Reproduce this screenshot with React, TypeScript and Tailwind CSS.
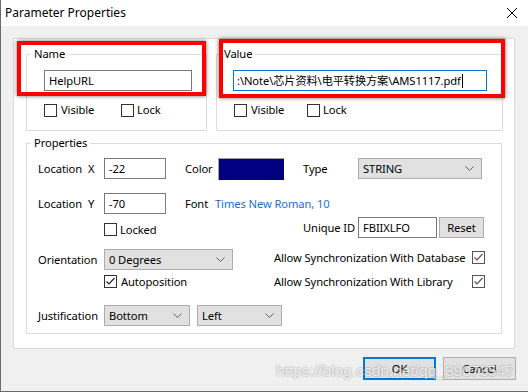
import React from "react";

const Chevron = () => (
  <svg width="9" height="5" viewBox="0 0 9 5" className="shrink-0">
    <polyline points="0.5,0.5 4.5,4.5 8.5,0.5" fill="none" stroke="#606060" strokeWidth="1" />
  </svg>
);

const Check = ({ gray }: { gray?: boolean }) => (
  <svg width="11" height="11" viewBox="0 0 11 11">
    <polyline points="1.5,5.5 4,8 9.5,2" fill="none" stroke={gray ? "#555" : "#222"} strokeWidth="1.2" />
  </svg>
);

const Box = ({ checked, gray }: { checked?: boolean; gray?: boolean }) => (
  <span
    className={
      "flex items-center justify-center w-[13px] h-[13px] bg-white border shrink-0 " +
      (gray ? "border-[#555]" : "border-[#333]")
    }
  >
    {checked ? <Check gray={gray} /> : null}
  </span>
);

const Select = ({ value, w }: { value: string; w: string }) => (
  <div className={"flex items-center justify-between h-[21px] border border-[#adadad] bg-[#e1e1e1] pl-[4px] pr-[7px] " + w}>
    <span>{value}</span>
    <Chevron />
  </div>
);

const Input = ({ value, w }: { value: string; w: string }) => (
  <div className={"flex items-center h-[21px] border border-[#7a7a7a] bg-white pl-[4px] whitespace-nowrap " + w}>
    <span>{value}</span>
  </div>
);

export default function App() {
  return (
    <div className="relative w-[528px] h-[392px] bg-[#f0f0f0] border-l border-b border-[#6b6b6b] text-[11.2px] leading-[14px] tracking-[-0.1px] text-black font-['Noto_Sans','Noto_Sans_CJK_SC',sans-serif] overflow-hidden">
      {/* title bar */}
      <div className="flex items-center justify-between h-[26px] bg-white pl-[4px] pr-[11px]">
        <span className="text-[12px] tracking-normal">Parameter Properties</span>
        <svg width="10" height="10" viewBox="0 0 10 10">
          <line x1="0" y1="0" x2="10" y2="10" stroke="#000" strokeWidth="1" />
          <line x1="10" y1="0" x2="0" y2="10" stroke="#000" strokeWidth="1" />
        </svg>
      </div>

      {/* white panel */}
      <div className="mt-[12px] ml-[12px] w-[502px] h-[311px] bg-white border border-[#d9d9d9] pl-[12px] pt-[8px]">
        <div className="flex">
          <fieldset className="w-[181px] h-[84px] border border-[#dcdcdc]">
            <legend className="ml-[4px] px-[3px]">Name</legend>
            <div className="ml-[17px] mt-[9px]">
              <Input value="HelpURL" w="w-[148px]" />
            </div>
            <div className="flex items-center ml-[17px] mt-[12px]">
              <Box />
              <span className="ml-[4px] w-[60px]">Visible</span>
              <Box />
              <span className="ml-[3px]">Lock</span>
            </div>
          </fieldset>
          <fieldset className="ml-[9px] w-[287px] h-[84px] border border-[#dcdcdc]">
            <legend className="ml-[4px] px-[3px]">Value</legend>
            <div className="ml-[16px] mt-[9px] flex items-center h-[21px] w-[254px] border border-[#0078d7] bg-white pl-[3px] whitespace-nowrap overflow-hidden">
              <span>:\Note\芯片资料\电平转换方案\AMS1117.pdf</span>
              <span className="ml-[1px] w-[1px] h-[14px] bg-black" />
            </div>
            <div className="flex items-center ml-[17px] mt-[12px]">
              <Box />
              <span className="ml-[4px] w-[56px]">Visible</span>
              <Box />
              <span className="ml-[3px]">Lock</span>
            </div>
          </fieldset>
        </div>

        <fieldset className="mt-[5px] w-[476px] h-[198px] border border-[#dcdcdc]">
          <legend className="ml-[4px] px-[3px]">Properties</legend>

          {/* Row A */}
          <div className="flex items-center mt-[8px] pl-[11px] h-[21px]">
            <div className="flex w-[66px]">
              <span className="w-[50px]">Location</span>
              <span>X</span>
            </div>
            <Input value="-22" w="w-[62px]" />
            <span className="ml-[19px] w-[33px]">Color</span>
            <div className="w-[66px] h-[22px] bg-[#000080] border-t border-l border-[#a0a0a0]" />
            <span className="ml-[19px] w-[55px]">Type</span>
            <Select value="STRING" w="w-[124px]" />
          </div>

          {/* Row B */}
          <div className="flex items-center mt-[14px] pl-[11px] h-[21px]">
            <div className="flex w-[66px]">
              <span className="w-[50px]">Location</span>
              <span>Y</span>
            </div>
            <Input value="-70" w="w-[62px]" />
            <span className="ml-[19px] w-[30px]">Font</span>
            <span className="text-[#1a6fd0]">Times New Roman, 10</span>
          </div>

          {/* Section C-E */}
          <div className="flex mt-[3px]">
            <div className="w-[247px] flex flex-col">
              <div className="flex items-center mt-[6px] pl-[77px] h-[13px]">
                <Box />
                <span className="ml-[3px]">Locked</span>
              </div>
              <div className="flex items-center mt-[13px] pl-[11px] h-[21px]">
                <span className="w-[66px]">Orientation</span>
                <Select value="0 Degrees" w="w-[129px]" />
              </div>
              <div className="flex items-center mt-[5px] pl-[77px] h-[13px]">
                <Box checked />
                <span className="ml-[4px]">Autoposition</span>
              </div>
            </div>
            <div className="flex flex-col">
              <div className="flex items-center h-[21px]">
                <span className="ml-[29px] w-[55px] whitespace-nowrap">Unique ID</span>
                <Input value="FBIIXLFO" w="w-[79px]" />
                <div className="ml-[2px] w-[45px] h-[21px] flex items-center justify-center bg-[#e1e1e1] border border-[#adadad]">
                  Reset
                </div>
              </div>
              <div className="flex items-center mt-[13px] h-[13px]">
                <span className="w-[198px] whitespace-nowrap">Allow Synchronization With Database</span>
                <Box checked gray />
              </div>
              <div className="flex items-center mt-[11px] h-[13px]">
                <span className="w-[198px] whitespace-nowrap">Allow Synchronization With Library</span>
                <Box checked gray />
              </div>
            </div>
          </div>

          {/* Row F */}
          <div className="flex items-center mt-[17px] pl-[11px] h-[21px]">
            <span className="w-[66px]">Justification</span>
            <Select value="Bottom" w="w-[86px]" />
            <div className="ml-[7px]">
              <Select value="Left" w="w-[85px]" />
            </div>
          </div>
        </fieldset>
      </div>

      {/* buttons */}
      <div className="flex justify-end gap-[7px] mt-[8px] pr-[12px]">
        <div className="w-[73px] h-[23px] flex items-center justify-center bg-[#e1e1e1] border-2 border-[#0078d7]">OK</div>
        <div className="w-[73px] h-[23px] flex items-center justify-center bg-[#e1e1e1] border border-[#adadad]">Cancel</div>
      </div>

      {/* red highlight boxes */}
      <div className="absolute left-[16px] top-[41px] w-[189px] h-[55px] border-4 border-[#ff0000] shadow-[0_0_4px_rgba(0,0,0,0.6)]" />
      <div className="absolute left-[218px] top-[39px] w-[286px] h-[59px] border-4 border-[#ff0000] shadow-[0_0_4px_rgba(0,0,0,0.6)]" />

      {/* watermark */}
      <div className="absolute left-[275px] top-[362px] text-[15.5px] leading-[18px] tracking-normal text-white/80 font-['Liberation_Sans',sans-serif] [text-shadow:0_0_2px_rgba(0,0,0,0.45)] whitespace-nowrap">
        https://blog.csdn.net/qq_39073547
      </div>
    </div>
  );
}
